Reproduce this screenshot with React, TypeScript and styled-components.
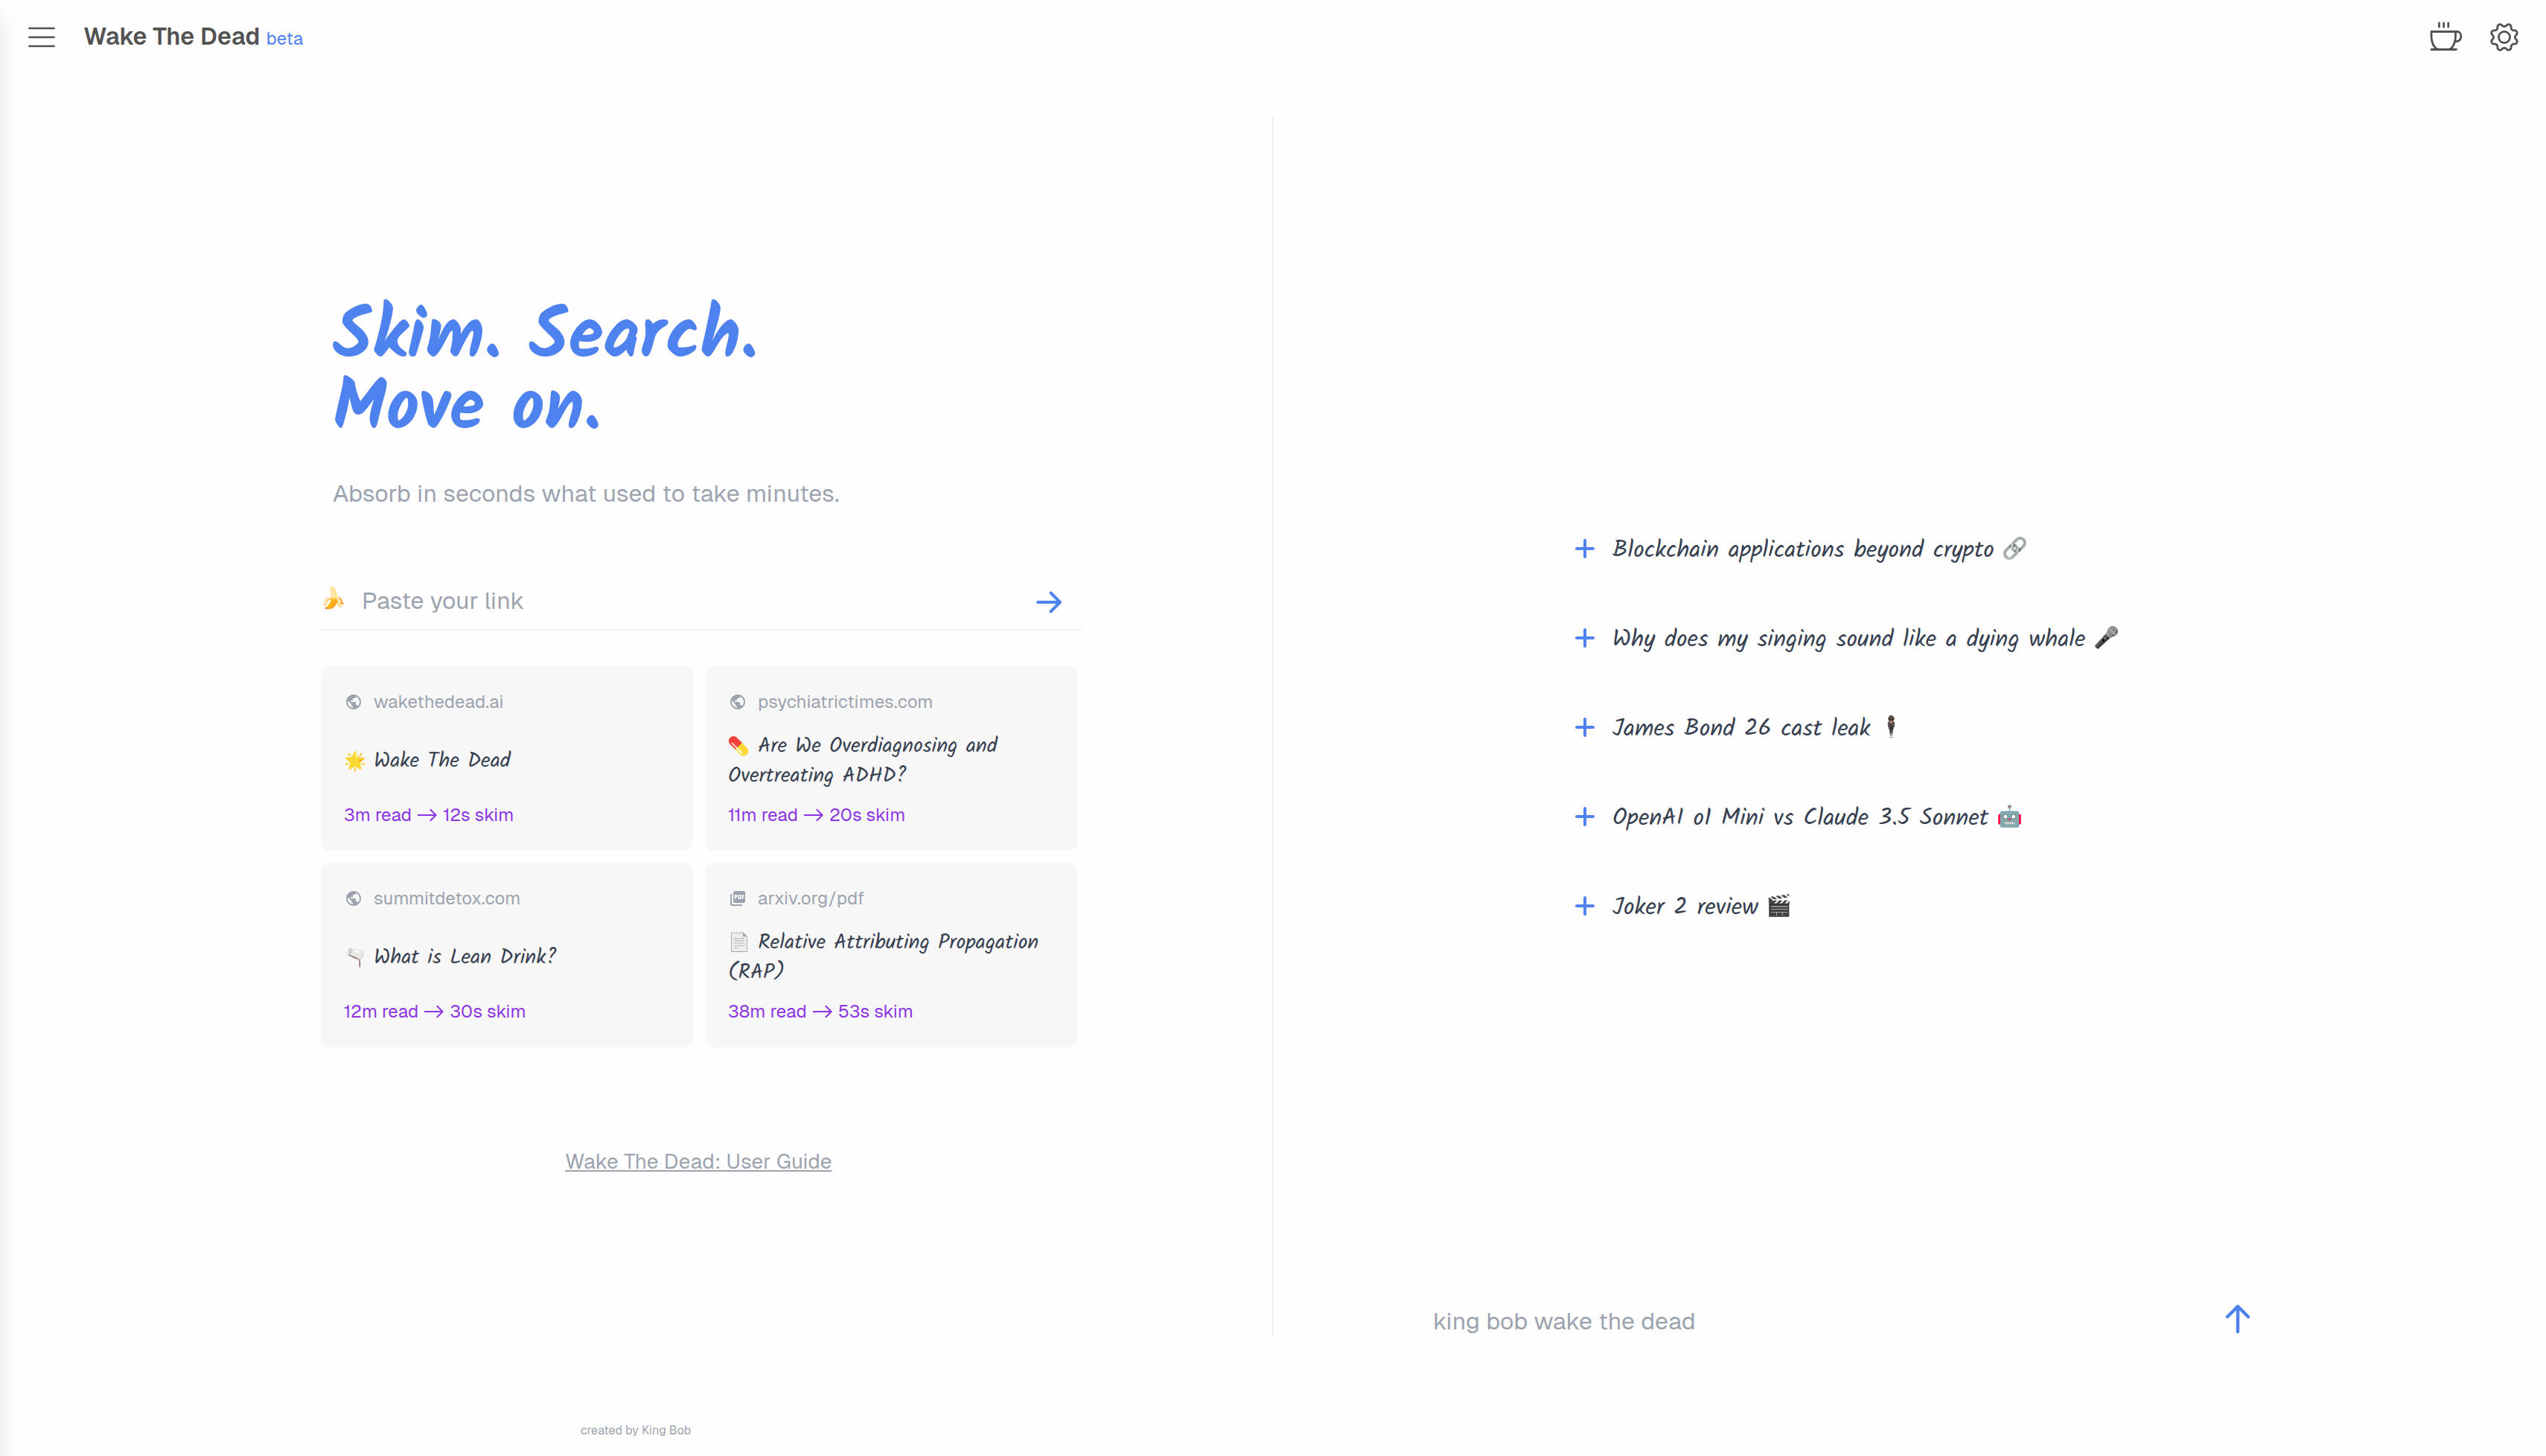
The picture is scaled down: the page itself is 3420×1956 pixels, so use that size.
import React from 'react';
import styled, { createGlobalStyle } from 'styled-components';
import { MdPublic, MdPictureAsPdf } from 'react-icons/md';

const sans = '"Geist", "Inter", "Liberation Sans", sans-serif';
const hand = '"Kalam", "Lato", "Liberation Sans", cursive';
const blue = '#4e82ee';
const muted = '#9ca3af';
const ink = '#374151';

const GlobalStyle = createGlobalStyle`
  * { box-sizing: border-box; }
  body { margin: 0; background: #fefefe; font-family: ${sans}; color: ${ink}; }
`;

const Page = styled.div`
  display: flex;
  flex-direction: column;
  width: 3420px;
  height: 1956px;
  overflow: hidden;
  background: #fefefe;
`;

const EdgeShadow = styled.div`
  position: absolute;
  left: -40px;
  top: 0;
  width: 40px;
  height: 1956px;
  box-shadow: 0 20px 30px rgba(0, 0, 0, 0.1);
`;

const Header = styled.header`
  display: flex;
  align-items: center;
  height: 100px;
  padding: 0 36px 0 38px;
  color: #525252;
`;

const Brand = styled.h1`
  flex: 1;
  margin: 1px 0 0 38px;
  font-size: 32px;
  font-weight: 600;
  line-height: 48px;
  letter-spacing: 0.1px;
`;

const Beta = styled.span`
  margin-left: 8px;
  font-size: 24px;
  font-weight: 400;
  letter-spacing: 0.2px;
  color: ${blue};
`;

const HeaderActions = styled.div`
  display: flex;
  align-items: center;
  gap: 36px;

  svg:first-child { margin-top: -2px; }
`;

const Main = styled.main`
  display: flex;
  height: 1856px;
`;

const Divider = styled.div`
  width: 2px;
  height: 1640px;
  margin-top: 56px;
  background: #f0f0f0;
`;

const ReaderPanel = styled.section`
  display: flex;
  flex-direction: column;
  width: 1709px;
  padding: 307px 254px 18px 431px;
`;

const Hero = styled.h2`
  margin: 0;
  padding-left: 16px;
  font: 700 96px/96px ${hand};
  color: ${blue};
`;

const Tagline = styled.p`
  margin: 40px 0 0;
  padding-left: 16px;
  font-size: 32px;
  line-height: 48px;
  letter-spacing: 0.15px;
  color: ${muted};
`;

const LinkRow = styled.div`
  display: flex;
  align-items: center;
  height: 79px;
  margin-top: 81px;
  padding-right: 28px;
  border-bottom: 2px solid #f2f2f3;

  svg { margin-top: 5px; }
`;

const Placeholder = styled.span`
  flex: 1;
  font-size: 32px;
  line-height: 48px;
  letter-spacing: 0.05px;
  color: ${muted};
`;

const BananaSlot = styled.span`
  width: 56px;
  margin: 3px 0 0 -1px;
  line-height: 48px;
`;

const Cards = styled.div`
  display: grid;
  grid-template-columns: 500px 500px;
  grid-auto-rows: 248px;
  gap: 16px;
  margin-top: 48px;
`;

const Card = styled.article`
  display: flex;
  flex-direction: column;
  padding: 32px;
  border-radius: 12px;
  background: #f7f7f7;
`;

const Source = styled.div<{ $tracking: number }>`
  display: flex;
  align-items: center;
  gap: 15px;
  height: 32px;
  font-size: 24px;
  line-height: 32px;
  letter-spacing: ${(p) => p.$tracking}px;
  color: ${muted};
`;

const CardTitle = styled.div`
  display: flex;
  align-items: center;
  height: 120px;
  margin-left: -1px;
  padding-top: 7px;
  font: 400 28px/40px ${hand};
`;

const ReadTime = styled.div`
  display: flex;
  align-items: center;
  gap: 7px;
  margin-left: -1px;
  font-size: 24px;
  line-height: 32px;
  letter-spacing: 0.05px;
  color: #8d35e2;
`;

const Emoji = styled.span<{ $size: number; $slot: number; $filter?: string; $transform?: string }>`
  display: inline-block;
  width: ${(p) => p.$slot}px;
  font-family: "Apple Color Emoji", "Noto Color Emoji", sans-serif;
  font-size: ${(p) => p.$size}px;
  line-height: 1;
  white-space: nowrap;
  filter: ${(p) => p.$filter ?? 'none'};
  transform: ${(p) => p.$transform ?? 'none'};
`;

const GuideLink = styled.a`
  align-self: flex-start;
  margin: 133px 0 0 328px;
  font-size: 28px;
  line-height: 40px;
  letter-spacing: 0.14px;
  color: ${muted};
  text-decoration: underline;
`;

const Credit = styled.footer`
  margin: auto 0 0 349px;
  font-size: 16px;
  line-height: 32px;
  letter-spacing: 0.04px;
  color: ${muted};
`;

const SearchPanel = styled.section`
  display: flex;
  flex-direction: column;
  flex: 1;
  padding: 577px 396px 0 214px;
`;

const Suggestions = styled.ul`
  margin: 0 0 0 191px;
  padding: 0;
  list-style: none;
`;

const Suggestion = styled.li`
  display: flex;
  align-items: center;
  height: 120px;
  font: 400 32px/48px ${hand};
`;

const SuggestionText = styled.span`
  margin: 6px 11px 0 24px;
`;

const SearchRow = styled.div`
  display: flex;
  align-items: center;
  justify-content: space-between;
  height: 80px;
  margin-top: 458px;
  font-size: 32px;
  line-height: 48px;
  letter-spacing: 0.12px;
  color: ${muted};

  svg { margin-top: -6px; }
`;

const MenuIcon = () => (
  <svg width="36" height="28" viewBox="0 0 36 28" fill="none" stroke="#525252" strokeWidth="2.6" strokeLinecap="round">
    <path d="M1.4 2H34.6M1.4 14H34.6M1.4 26H34.6" />
  </svg>
);

const CoffeeIcon = () => (
  <svg width="44" height="40" viewBox="0 0 44 40" fill="none" stroke="#525252" strokeWidth="2.8" strokeLinecap="round" strokeLinejoin="round">
    <path d="M12.5 1.8V7.2M18.7 1.8V7.2M24.8 1.8V7.2" />
    <path d="M2 13.5H34.5V20C34.5 28 31 35 26.5 37.5M2 13.5V20C2 28 5.5 35 10.5 37.5M2 37.5H35.5" />
    <path d="M34.5 13.5H37C40 13.5 41.8 16.5 41.8 20C41.8 24 39 26.5 34.8 26.8" />
  </svg>
);

const gearPath =
  Array.from({ length: 160 }, (_, i) => {
    const a = (i / 160) * Math.PI * 2;
    const wave = Math.cos(8 * (a - Math.PI / 8));
    const r = 16.4 + (1.9 * Math.tanh(1.4 * wave)) / Math.tanh(1.4);
    return `${i ? 'L' : 'M'}${(20 + r * Math.cos(a)).toFixed(2)} ${(20 + r * Math.sin(a)).toFixed(2)}`;
  }).join('') + 'Z';

const GearIcon = () => (
  <svg width="40" height="40" viewBox="0 0 40 40" fill="none" stroke="#525252" strokeWidth="2.8" strokeLinejoin="round">
    <path d={gearPath} />
    <circle cx="20" cy="20" r="7.6" />
  </svg>
);

const ArrowRight = () => (
  <svg width="36" height="32" viewBox="0 0 36 32" fill="none" stroke={blue} strokeWidth="4" strokeLinecap="round" strokeLinejoin="round">
    <path d="M3 16H33M20.5 3.5L33 16L20.5 28.5" />
  </svg>
);

const ArrowUp = () => (
  <svg width="36" height="40" viewBox="0 0 36 40" fill="none" stroke={blue} strokeWidth="4.4" strokeLinecap="round" strokeLinejoin="round">
    <path d="M18 37V3M4 17L18 3L32 17" />
  </svg>
);

const Plus = () => (
  <svg width="26" height="26" viewBox="0 0 26 26" fill="none" stroke={blue} strokeWidth="4" strokeLinecap="round">
    <path d="M13 2V24M2 13H24" />
  </svg>
);

const LongArrow = () => (
  <svg width="28" height="18" viewBox="0 0 28 18" fill="none" stroke="#8d35e2" strokeWidth="2">
    <path d="M1 9H26M17.8 1.2L25.6 9L17.8 16.8" />
  </svg>
);

type CardData = {
  pdf?: boolean;
  source: string;
  emoji: string;
  title: string;
  read: string;
  skim: string;
  filter?: string;
  transform?: string;
};

const cards: CardData[] = [
  { source: 'wakethedead.ai', emoji: '🌟', title: 'Wake The Dead', read: '3m read', skim: '12s skim' },
  {
    source: 'psychiatrictimes.com',
    emoji: '💊',
    title: 'Are We Overdiagnosing and Overtreating ADHD?',
    read: '11m read',
    skim: '20s skim',
    transform: 'rotate(180deg)',
  },
  { source: 'summitdetox.com', emoji: '🫗', title: 'What is Lean Drink?', read: '12m read', skim: '30s skim' },
  {
    pdf: true,
    source: 'arxiv.org/pdf',
    emoji: '📄',
    title: 'Relative Attributing Propagation (RAP)',
    read: '38m read',
    skim: '53s skim',
    filter: 'grayscale(1) brightness(0.93)',
  },
];

const suggestions = [
  { text: 'Blockchain applications beyond crypto', emoji: '🔗', filter: 'grayscale(0.9)' },
  { text: 'Why does my singing sound like a dying whale', emoji: '🎤', filter: 'grayscale(1) brightness(0.9)' },
  { text: 'James Bond 26 cast leak', emoji: '🕴🏾' },
  { text: 'OpenAI o1 Mini vs Claude 3.5 Sonnet', emoji: '🤖', filter: 'hue-rotate(-15deg) saturate(1.6)' },
  { text: 'Joker 2 review', emoji: '🎬' },
];

export default function App() {
  return (
    <Page>
      <GlobalStyle />
      <EdgeShadow />
      <Header>
        <MenuIcon />
        <Brand>
          Wake The Dead<Beta>beta</Beta>
        </Brand>
        <HeaderActions>
          <CoffeeIcon />
          <GearIcon />
        </HeaderActions>
      </Header>
      <Main>
        <ReaderPanel>
          <Hero>
            Skim. Search.
            <br />
            Move on.
          </Hero>
          <Tagline>Absorb in seconds what used to take minutes.</Tagline>
          <LinkRow>
            <BananaSlot>
              <Emoji $size={28} $slot={32}>🍌</Emoji>
            </BananaSlot>
            <Placeholder>Paste your link</Placeholder>
            <ArrowRight />
          </LinkRow>
          <Cards>
            {cards.map((c) => (
              <Card key={c.source}>
                <Source $tracking={c.pdf ? 0.3 : 0.12}>
                  {c.pdf ? <MdPictureAsPdf size={24} /> : <MdPublic size={24} />}
                  {c.source}
                </Source>
                <CardTitle>
                  <div>
                    <Emoji $size={24} $slot={29} $filter={c.filter} $transform={c.transform}>
                      {c.emoji}
                    </Emoji>{' '}
                    {c.title}
                  </div>
                </CardTitle>
                <ReadTime>
                  <span>{c.read}</span>
                  <LongArrow />
                  <span>{c.skim}</span>
                </ReadTime>
              </Card>
            ))}
          </Cards>
          <GuideLink>Wake The Dead: User Guide</GuideLink>
          <Credit>created by King Bob</Credit>
        </ReaderPanel>
        <Divider />
        <SearchPanel>
          <Suggestions>
            {suggestions.map((s) => (
              <Suggestion key={s.text}>
                <Plus />
                <SuggestionText>{s.text}</SuggestionText>
                <Emoji $size={28} $slot={36} $filter={s.filter}>
                  {s.emoji}
                </Emoji>
              </Suggestion>
            ))}
          </Suggestions>
          <SearchRow>
            king bob wake the dead
            <ArrowUp />
          </SearchRow>
        </SearchPanel>
      </Main>
    </Page>
  );
}
